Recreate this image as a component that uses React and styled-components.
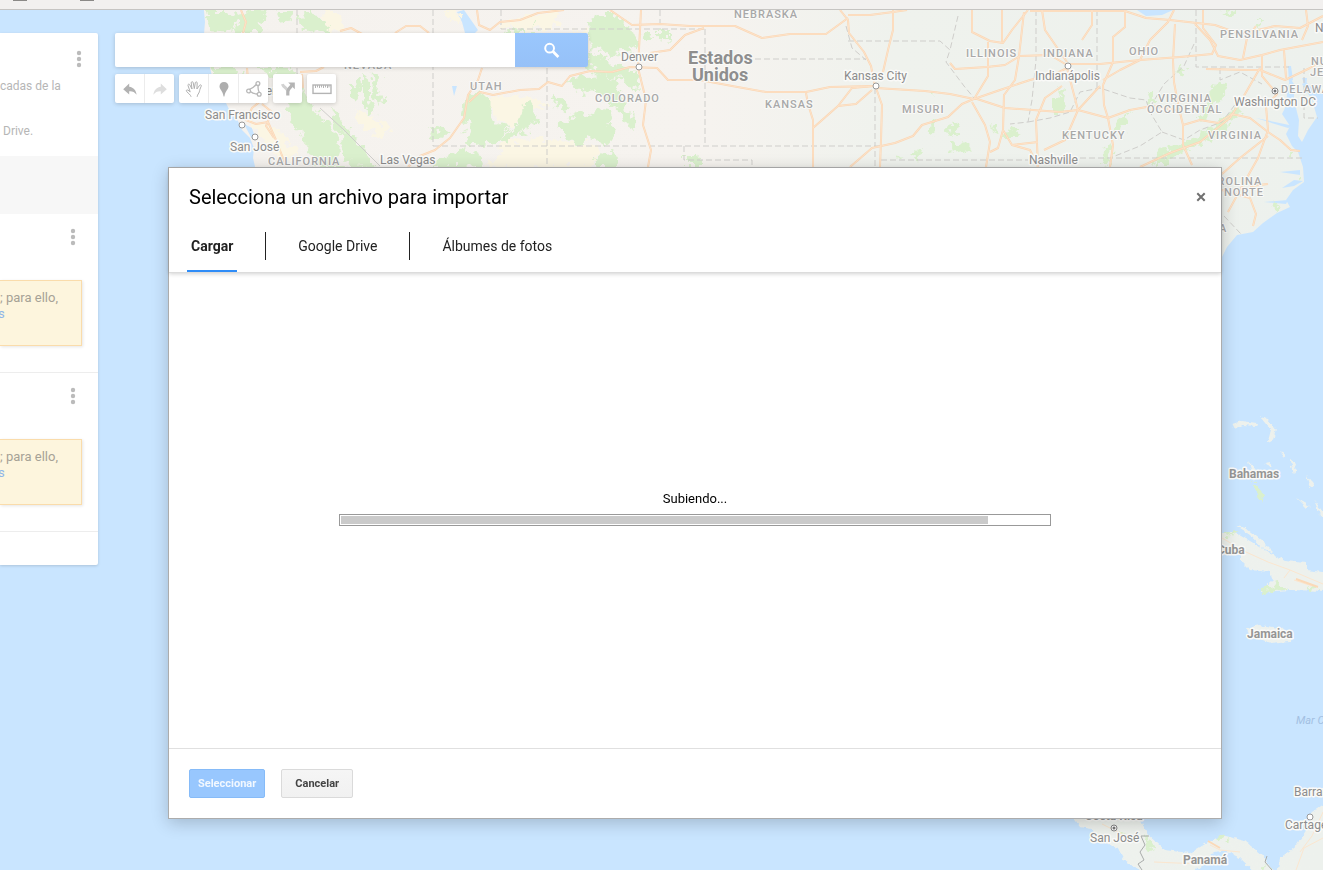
import styled, { createGlobalStyle } from 'styled-components';

const greens = [
    'M207 10 L226 10 L232 16 L242 12 L262 10 L268 16 L258 22 L264 33 L240 33 L236 24 L228 32 L210 30Z',
    'M216 12 L232 20 L226 28 L212 22Z',
    'M276 12 L290 12 L292 20 L280 22Z',
    'M300 10 L312 10 L318 18 L329 25 L328 33 L312 28 L302 33Z',
    'M210 68 L236 68 L243 76 L238 84 L242 92 L228 98 L216 82Z',
    'M252 68 L290 68 L298 76 L280 78Z',
    'M286 96 L302 92 L310 104 L322 118 L334 130 L340 148 L336 160 L346 168 L318 168 L308 148 L298 128 L288 112Z',
    'M338 130 L350 140 L364 150 L378 166 L352 168 L344 148Z',
    'M330 106 L342 122 L356 140 L350 142 L334 124Z',
    'M352 84 L358 78 L362 86 L356 102 L352 98Z',
    'M362 74 L370 80 L370 100 L374 112 L368 114 L362 96Z',
    'M374 72 L380 80 L378 92 L384 98 L378 106 L372 94Z',
    'M464 100 L474 94 L484 96 L492 104 L490 116 L498 124 L510 126 L504 138 L490 144 L474 146 L464 138 L470 126 L462 116Z',
    'M430 126 L440 130 L450 132 L446 140 L432 138Z',
    'M432 162 L448 156 L456 152 L464 150 L480 154 L482 166 L434 168Z',
    'M516 122 L522 108 L532 104 L536 116 L530 130 L516 136Z',
    'M532 120 L540 118 L538 124Z',
    'M502 140 L514 126 L518 130 L508 142Z',
    'M588 22 L600 14 L614 14 L622 24 L632 30 L636 42 L630 52 L618 48 L612 60 L602 48 L590 50Z',
    'M590 52 L604 56 L612 64 L636 70 L640 92 L628 88 L618 76 L596 74 L588 64Z',
    'M504 30 L522 32 L536 32 L534 34 L506 34Z M533 18 L536 18 L535 30Z',
    'M552 94 L560 96 L570 108 L566 114 L556 106Z',
    'M566 84 L580 76 L600 74 L620 78 L616 88 L624 98 L618 108 L604 100 L596 90 L580 92Z',
    'M554 128 L566 120 L578 114 L592 116 L602 108 L612 114 L608 124 L614 136 L606 146 L592 138 L580 144 L566 138Z',
    'M608 96 L622 106 L634 118 L636 128 L626 122Z',
    'M644 32 L652 32 L654 38 L646 38Z M658 30 L670 30 L670 41 L658 38Z',
    'M594 160 L604 152 L614 150 L620 160 L616 168 L598 168Z',
    'M684 156 L700 156 L702 166 L684 166Z',
    'M926 124 L936 122 L934 134 L926 132Z',
    'M952 118 L960 120 L956 136 L946 134Z',
    'M950 142 L970 144 L968 150 L952 154Z',
    'M914 152 L922 150 L918 160 L910 156Z M894 154 L902 156 L898 160Z M932 92 L934 94 L930 96Z',
    'M990 124 L998 128 L996 136Z M1008 130 L1022 126 L1016 138 L1006 138Z',
    'M1056 94 L1064 86 L1062 116 L1056 116Z',
    'M1116 122 L1130 110 L1124 130 L1112 132Z',
    'M1104 150 L1112 142 L1110 166 L1102 162Z',
    'M1146 94 L1154 94 L1154 101 L1148 101Z',
    'M1177 74 L1186 67 L1184 76Z',
    'M1212 88 L1222 80 L1226 92 L1216 106 L1204 118 L1198 118Z',
    'M1160 150 L1184 144 L1214 126 L1236 108 L1240 112 L1218 134 L1192 148 L1166 158 L1152 162Z',
    'M1156 162 L1168 158 L1168 166 L1154 166Z',
    'M1220 12 L1236 10 L1236 17Z',
    'M1254 22 L1262 22 L1260 28Z',
    'M1272 202 L1282 206 L1276 210Z',
    'M1286 154 L1294 152 L1292 159Z M1300 180 L1304 180 L1303 184Z',
];

const deserts = [
    'M322 12 L340 12 L346 30 L330 32Z',
    'M484 98 L520 94 L548 104 L520 118 L512 126 L500 122Z',
    'M506 142 L540 138 L600 146 L592 168 L486 168Z',
    'M446 10 L458 10 L460 24 L448 20Z',
    'M500 24 L536 12 L556 14 L560 26 L520 32Z',
    'M250 120 L280 130 L300 156 L280 160 L262 140Z',
    'M574 32 L586 30 L588 50 L580 60Z',
    'M354 110 L372 116 L392 130 L384 136 L362 126Z',
];

const roads = [
    'M241 10 L246 22 L243 33',
    'M247 68 L248 80 L262 100 L252 108 L246 120 L256 124 L268 122 L276 140 L286 166',
    'M262 104 L272 112 L266 126 L274 138',
    'M300 72 L316 71 L324 67',
    'M302 74 L303 88',
    'M340 31 L351 28 L362 34',
    'M395 33 L406 26 L420 26 L429 33',
    'M477 10 L479 25 L490 30 L500 22 L520 20 L538 13 L564 10',
    'M482 68 L478 80 L468 95 L464 118 L450 138 L435 150 L420 156 L408 167',
    'M469 102 L480 92 L493 95 L520 90 L539 89 L548 82 L562 86 L570 76 L590 71 L612 72 L630 67 L657 68 L668 80 L700 80 L732 86 L766 92 L806 92 L830 87 L874 86',
    'M641 10 L640 30 L638 68 L646 100 L643 125 L651 150 L648 167',
    'M610 10 L632 25 L660 24 L690 26 L710 26 L735 26 L762 38 L790 34 L826 34 L848 18',
    'M650 53 L670 50 L685 35 L704 28',
    'M840 10 L848 20 L849 33 L864 52 L871 66 L875 86',
    'M848 15 L870 15 L893 12 L907 10',
    'M893 10 L893 30 L888 50 L883 72',
    'M876 88 L882 105 L881 140 L880 167',
    'M850 167 L872 148 L895 143 L913 136 L922 125 L948 117 L962 104 L976 98',
    'M876 88 L925 91 L950 94 L974 99',
    'M813 167 L813 120 L808 104 L806 93',
    'M813 128 L838 106 L852 88 L874 86',
    'M838 106 L856 104 L872 90',
    'M974 99 L988 76 L988 42',
    'M972 10 L972 32 L990 41 L1003 43 L1012 30 L1028 10',
    'M1002 10 L1002 43',
    'M950 63 L955 69 L987 67 L1005 65 L1020 56 L1050 55 L1067 65',
    'M974 99 L1000 90 L1030 80 L1055 74 L1067 68',
    'M974 98 L1005 108 L1060 112 L1078 110',
    'M972 102 L985 125 L990 142 L986 167',
    'M1024 12 L1019 56 L1015 80 L1004 95 L1003 130 L1012 145 L1038 142',
    'M1003 130 L998 148 L990 152',
    'M1012 145 L1030 150 L1038 167 L1036 120 L1045 98 L1062 86',
    'M1042 10 L1045 30 L1067 62',
    'M1092 10 L1092 25 L1082 40',
    'M1125 10 L1125 27 L1113 37 L1113 62 L1103 85',
    'M1030 11 L1080 11 L1125 11 L1146 18 L1170 20 L1215 25 L1240 34 L1275 26 L1300 28 L1323 16',
    'M1067 64 L1100 64 L1140 60 L1180 57 L1212 54 L1216 45 L1203 28 L1203 10',
    'M1100 86 L1078 110 L1065 140 L1044 150',
    'M1103 85 L1104 105 L1108 118 L1113 145 L1110 167',
    'M1067 68 L1078 110',
    'M1078 110 L1108 118 L1130 110 L1152 106 L1176 110',
    'M1103 80 L1120 70 L1140 60 L1150 40 L1168 22 L1174 10',
    'M1175 24 L1173 60 L1174 82 L1178 104 L1183 125 L1183 145 L1192 165',
    'M1195 24 L1210 40 L1218 56 L1240 60 L1262 55 L1280 50 L1323 42',
    'M1243 58 L1247 38 L1256 26',
    'M1140 167 L1170 153 L1200 142 L1230 118 L1245 94 L1260 68',
    'M1183 125 L1200 120 L1218 123 L1232 114 L1250 118 L1268 132 L1280 140 L1291 150 L1300 151',
    'M1262 55 L1262 76 L1277 94 L1266 106 L1268 130 L1258 158 L1240 190 L1228 212',
    'M1206 69 L1248 70 L1260 70 L1285 80 L1310 68 L1323 60',
    'M1284 50 L1286 78',
    'M1222 174 L1240 158 L1268 136',
    'M1222 190 L1250 198 L1256 214 L1253 226',
    'M1250 186 L1268 184',
    'M1306 10 L1308 26 L1302 40',
];

const borders = [
    'M297 10 V33', 'M297 68 V92',
    'M433 10 V146', 'M433 146 H880', 'M501 10 V29 H705', 'M547 68 V166', 'M660 10 V29', 'M705 29 V146',
    'M755 59 H866', 'M684 146 V160 H752 V166', 'M846 26 L852 48 L866 60', 'M848 41 H940 L950 50 L946 62 L964 86 L974 98',
    'M875 88 V166', 'M881 160 H1028', 'M1036 10 V60 L1032 100 L1028 122 L1010 124', 'M958 16 L950 50',
    'M1097 10 V90', 'M1028 122 L1050 118 L1070 112 L1080 92 L1100 88 L1130 98 L1146 100 L1150 112 L1162 132 L1140 146 L1110 158',
    'M1196 10 V67 H1290', 'M1194 44 L1184 66 L1164 84 L1152 104', 'M1080 158 H1302',
    'M1162 132 L1184 140 L1200 130 L1222 122 L1240 98', 'M1220 68 L1220 80 L1240 72 L1262 84', 'M1304 68 V118 H1318',
    'M1224 216 L1241 234',
];

const stateLabels = [
    [734, 18, 'NEBRASKA'], [344, 69, 'NEVADA'], [470, 90, 'UTAH'], [595, 102, 'COLORADO'],
    [765, 108, 'KANSAS'], [902, 113, 'MISURI'], [966, 57, 'ILLINOIS'], [1043, 57, 'INDIANA'],
    [1129, 55, 'OHIO'], [1220, 38, 'PENSILVANIA'], [1158, 102, 'VIRGINIA'], [1147, 113, 'OCCIDENTAL'],
    [1208, 139, 'VIRGINIA'], [1062, 139, 'KENTUCKY'], [268, 165, 'CALIFORNIA'], [1281, 93, 'DELAWARE'],
    [1311, 65, 'NUEVA'], [1310, 76, 'JERSEY'], [1201, 185, 'CAROLINA'], [1224, 196, 'NORTE'],
    [1219, 232, 'A'],
];

const cityLabels = [
    [205, 119, 'San Francisco'], [230, 151, 'San José'], [380, 164, 'Las Vegas'], [621, 61, 'Denver'],
    [844, 80, 'Kansas City'], [1035, 80, 'Indianápolis'], [1029, 164, 'Nashville'], [1234, 106, 'Washington DC'],
    [1315, 32, 'Nueva York'], [1090, 842, 'San José'], [1285, 829, 'Cartagena'], [1294, 796, 'Barranquilla'],
    [225, 95, 'Sacramento'],
];

const countryLabels = [
    [1229, 478, 'Bahamas'], [1217, 554, 'Cuba'], [1247, 638, 'Jamaica'], [1085, 820, 'Costa Rica'], [1183, 864, 'Panamá'],
];

const towns = [[242, 125], [255, 137], [639, 67], [876, 86], [1068, 66], [1310, 817]];
const capitals = [[1275, 91], [1114, 828]];

const Map = () => (
    <MapCanvas viewBox="0 10 1323 860" preserveAspectRatio="xMinYMin slice" aria-label="Mapa">
        <defs>
            <linearGradient id="land" x1="200" x2="1323" y1="0" y2="0" gradientUnits="userSpaceOnUse">
                <stop offset="0" stopColor="#f5f2ee" />
                <stop offset="0.45" stopColor="#f6f3ef" />
                <stop offset="0.62" stopColor="#eff2ed" />
                <stop offset="1" stopColor="#edf1ed" />
            </linearGradient>
            <filter id="rough" x="-5%" y="-5%" width="110%" height="110%" colorInterpolationFilters="sRGB">
                <feTurbulence type="fractalNoise" baseFrequency="0.12" numOctaves="3" seed="4" />
                <feDisplacementMap in="SourceGraphic" scale="16" xChannelSelector="R" yChannelSelector="G" />
            </filter>
            <filter id="coast" x="-5%" y="-5%" width="110%" height="110%" colorInterpolationFilters="sRGB">
                <feTurbulence type="fractalNoise" baseFrequency="0.2" numOctaves="2" seed="9" />
                <feDisplacementMap in="SourceGraphic" scale="5" xChannelSelector="R" yChannelSelector="G" />
            </filter>
        </defs>

        {/* mainland, islands and the isthmus */}
        <g fill="url(#land)">
            <path d="M203 0 L205 22 L204 34 L208 55 L210 68 L213 80 L220 96 L226 103 L231 113 L238 121 L242 130 L250 138 L254 148 L253 158 L257 175 L400 400 L1200 400 L1222 257 L1227 247 L1237 235 L1253 232 L1263 223 L1277 213 L1290 207 L1286 200 L1293 190 L1304 182 L1303 167 L1298 152 L1292 146 L1286 134 L1290 126 L1282 114 L1286 106 L1287 94 L1290 78 L1294 84 L1294 100 L1299 120 L1298 136 L1302 142 L1308 130 L1317 117 L1312 100 L1302 84 L1306 82 L1318 94 L1340 92 L1340 0Z" />
            <g filter="url(#coast)">
                <path d="M1200 532 L1235 532 L1250 541 L1270 553 L1285 561 L1307 563 L1307 570 L1330 573 L1330 591 L1290 590 L1260 592 L1273 580 L1270 572 L1250 570 L1241 561 L1241 552 L1200 548Z" />
                <path d="M1246 628 L1260 625 L1280 628 L1293 637 L1290 641 L1270 643 L1250 636Z" />
                <path d="M1236 526 L1246 528 L1262 541 L1274 553 L1262 548 L1250 535Z" />
                <path d="M1232 424 L1242 421 L1257 423 L1256 426 L1242 425 L1234 428Z M1260 417 L1268 419 L1276 430 L1272 443 L1268 441 L1271 430Z" />
                <path d="M1249 462 L1256 470 L1254 482Z M1264 464 L1271 463 L1270 467Z M1280 452 L1286 455 L1284 458Z M1290 458 L1297 464 L1294 474Z M1306 475 L1315 486 L1310 488Z M1296 498 L1310 506 L1306 508Z M1314 500 L1326 516 L1320 515Z" />
                <path d="M1070 815 L1080 827 L1092 829 L1100 840 L1118 848 L1124 860 L1135 868 L1165 880 L1196 870 L1206 862 L1211 853 L1224 850 L1240 858 L1258 875 L1276 875 L1262 855 L1245 841 L1222 835 L1207 843 L1190 853 L1165 850 L1148 835 L1138 815Z" />
                <path d="M1330 800 L1312 812 L1307 830 L1297 845 L1280 858 L1276 880 L1330 880Z" />
            </g>
        </g>

        {/* lakes and inlets */}
        <g fill="#c9e5ff">
            <path d="M457 12 L464 10 L471 20 L478 30 L474 34 L465 33 L462 22Z M452 86 L457 86 L454 96Z M1137 10 L1173 10 L1162 15 L1146 16Z" />
            <path d="M1288 66 L1291 66 L1293 80 L1289 82Z M1302 78 L1307 78 L1306 88Z M1282 188 L1294 180 L1303 181 L1294 186Z M1280 172 L1300 170 L1300 175Z M1264 202 L1288 200 L1286 204Z M1256 118 L1294 126 L1288 128Z" />
            <path d="M244 124 L252 128 L256 140 L252 139Z" />
        </g>

        <g filter="url(#rough)">
            {deserts.map(d => <path key={d} d={d} fill="#fbf6e4" />)}
            {greens.map(d => <path key={d} d={d} fill="#daf0cd" />)}
            <path fill="#daf0cd" d="M1260 588 L1284 584 L1290 589 L1264 593Z M1308 588 L1316 586 L1314 592Z M1253 484 L1262 484 L1264 497 L1258 498Z M1222 531 L1236 530 L1232 536Z M1144 834 L1156 846 L1148 852Z M1216 838 L1226 836 L1222 843Z M1264 864 L1268 870 L1262 870Z M1120 830 L1126 834 L1120 838Z" />
        </g>

        <g fill="none" stroke="#cfcecb" strokeWidth="1" strokeDasharray="6 3">
            {borders.map(d => <path key={d} d={d} />)}
        </g>
        <g fill="none" stroke="#a9acab" strokeWidth="1">
            <path d="M1149 836 L1141 836 L1145 845 L1140 852 L1144 860 L1138 864 L1142 870" />
            <path d="M1267 856 L1265 862 L1272 870" />
            <path d="M320 108 L344 130 L380 166" stroke="#cfcecb" />
        </g>

        <g fill="none" stroke="#fbd6b3" strokeWidth="2" strokeLinejoin="round">
            {roads.map(d => <path key={d} d={d} />)}
        </g>
        <g fill="none" stroke="#fde3ca" strokeWidth="1" strokeLinejoin="round">
            {roads.map(d => <path key={d} d={d} />)}
        </g>
        <g fill="none" stroke="#fbe6cf" strokeWidth="1">
            <path d="M1222 538 L1246 552 L1268 562 L1290 570 L1323 584 M1290 570 L1284 578 M1294 580 L1312 586" />
            <path d="M1102 824 L1130 838 M1210 845 L1220 850 L1240 852 M1154 862 L1200 864 M1323 812 L1312 836 L1300 852 M1323 838 L1304 848 L1296 870" />
        </g>
        <path d="M1208 841 L1220 848 M1296 579 L1318 587" fill="none" stroke="#fbd9b8" strokeWidth="2" />

        {towns.map(([x, y]) => <circle key={x} cx={x} cy={y} r="3" fill="#fff" stroke="#999" />)}
        {capitals.map(([x, y]) => (
            <g key={x}>
                <circle cx={x} cy={y} r="3" fill="#fff" stroke="#858585" />
                <circle cx={x} cy={y} r="1.5" fill="#777" />
            </g>
        ))}

        {stateLabels.map(([x, y, name]) => <StateLabel key={`${name}${y}`} x={x} y={y}>{name}</StateLabel>)}
        {cityLabels.map(([x, y, name]) => <CityLabel key={`${name}${y}`} x={x} y={y}>{name}</CityLabel>)}
        {countryLabels.map(([x, y, name]) => <CountryLabel key={name} x={x} y={y}>{name}</CountryLabel>)}
        <NationLabel x="688" y="64">Estados</NationLabel>
        <NationLabel x="692" y="81">Unidos</NationLabel>
        <SeaLabel x="1296" y="724">Mar Caribe</SeaLabel>
    </MapCanvas>
);

const Dots = () => (
    <svg width="6" height="18" viewBox="0 0 6 18" fill="#bbb">
        <circle cx="3" cy="3" r="2.2" />
        <circle cx="3" cy="9" r="2.2" />
        <circle cx="3" cy="15" r="2.2" />
    </svg>
);

const UndoIcon = ({ color, flip }) => (
    <svg width="20" height="20" viewBox="0 0 20 20">
        <path
            transform={flip ? 'translate(20 0) scale(-1 1)' : undefined}
            fill={color}
            d="M9.2 4.6 L3.2 10.2 L9.2 15.4 V12.2 C12.4 12 14.6 12.8 16.6 15.8 C16.2 11.8 13.8 8.4 9.2 7.8Z"
        />
    </svg>
);

const HandIcon = () => (
    <svg width="20" height="20" viewBox="0 0 20 20" fill="none" stroke="#b0b0b0" strokeWidth="1" strokeLinejoin="round" strokeLinecap="round">
        <path d="M7 17.4 C6.4 15.6 4.6 14.6 2.7 12.6 C1.7 11.4 2.8 10.5 4 11.1 L6.2 12.9 L4 6.5 C3.6 5.1 5.2 4.6 5.8 5.9 L8 10 L7.2 3.8 C7.2 2.4 9 2.3 9.2 3.6 L10.3 9.6 L11.3 3.7 C11.6 2.4 13.3 2.7 13.2 4 L12.9 10 L15.6 6.3 C16.4 5.2 17.8 6.1 17.2 7.3 C16 9.6 15.7 11.2 15.3 12.9 C14.9 14.5 13.5 15.2 13.2 17.4" />
    </svg>
);

const PinIcon = () => (
    <svg width="20" height="20" viewBox="0 0 20 20" fill="#aeaeae">
        <path d="M10 3 C7.2 3 5.5 5 5.5 7.4 C5.5 10.4 9 12 9.6 17.4 H10.4 C11 12 14.5 10.4 14.5 7.4 C14.5 5 12.8 3 10 3Z" />
    </svg>
);

const LineIcon = () => (
    <svg width="20" height="20" viewBox="0 0 20 20" fill="none" stroke="#b8b8b8" strokeWidth="1.3">
        <path d="M12.2 5.4 C10.4 8 7.4 9.6 5 10.6 M6.4 12.6 C8.6 14.6 11 15 13.2 15 M14.2 6.6 C13.8 9 14.2 11.4 15.2 13.2" />
        <circle cx="13.9" cy="4.6" r="1.9" />
        <circle cx="4.6" cy="12" r="1.9" />
        <circle cx="15.2" cy="15.2" r="1.9" />
    </svg>
);

const RouteIcon = () => (
    <svg width="20" height="20" viewBox="0 0 20 20">
        <path d="M4.4 5.2 C5.4 8.8 9.6 8.4 9.8 12.5" fill="none" stroke="#d2d2d2" strokeWidth="3" />
        <path d="M9.8 16.6 V12.8 C9.8 10.6 11 9.4 13.8 6.6" fill="none" stroke="#b4b4b4" strokeWidth="3.2" />
        <path d="M10.2 3.6 H16.8 V10.2Z" fill="#b4b4b4" />
    </svg>
);

const RulerIcon = () => (
    <svg width="20" height="20" viewBox="0 0 20 20" fill="none" stroke="#b4b4b4">
        <rect x="1" y="6" width="18" height="8.4" strokeWidth="1.4" />
        <path d="M3.5 6 V9 M5.5 6 V8.4 M7.5 6 V9 M9.5 6 V8.4 M11.5 6 V9 M13.5 6 V8.4 M15.5 6 V9 M17 6 V8.4" />
    </svg>
);

const SearchIcon = () => (
    <svg width="18" height="18" viewBox="0 0 18 18" fill="none" stroke="#fff">
        <circle cx="6.6" cy="7.2" r="4.4" strokeWidth="2" />
        <path d="M10 10.6 L15.4 16" strokeWidth="2.8" />
    </svg>
);

const CloseIcon = () => (
    <svg width="10" height="10" viewBox="0 0 10 10" fill="none" stroke="#707070" strokeWidth="2">
        <path d="M1.3 1.3 L8.7 8.7 M8.7 1.3 L1.3 8.7" />
    </svg>
);

const Layer = () => (
    <LayerSection>
        <LayerMenu aria-label="Opciones de capa"><Dots /></LayerMenu>
        <Note>
            <p>; para ello,</p>
            <a href="#ayuda">s</a>
        </Note>
    </LayerSection>
);

const App = () => {
    return (
        <>
            <GlobalStyle />
            <Page>
                <BrowserBar><i /><i /></BrowserBar>
                <Workspace>
                    <Map />
                    <Sidebar>
                        <MapInfo>
                            <MapMenu aria-label="Opciones del mapa"><Dots /></MapMenu>
                            <p>cadas de la</p>
                            <p className="last">Drive.</p>
                        </MapInfo>
                        <LayerActions />
                        <Layer />
                        <Layer />
                        <BaseMap />
                    </Sidebar>
                    <Controls>
                        <SearchBar>
                            <input type="text" aria-label="Buscar" />
                            <button type="button" aria-label="Buscar"><SearchIcon /></button>
                        </SearchBar>
                        <Toolbar>
                            <ToolGroup>
                                <Tool aria-label="Deshacer"><UndoIcon color="#b2b2b2" /></Tool>
                                <Tool aria-label="Rehacer"><UndoIcon color="#dedede" flip /></Tool>
                            </ToolGroup>
                            <ToolGroup>
                                <Tool aria-label="Mover"><HandIcon /></Tool>
                                <Tool aria-label="Añadir marcador"><PinIcon /></Tool>
                                <Tool aria-label="Trazar una línea"><LineIcon /></Tool>
                            </ToolGroup>
                            <ToolGroup>
                                <Tool aria-label="Añadir indicaciones"><RouteIcon /></Tool>
                            </ToolGroup>
                            <ToolGroup>
                                <Tool aria-label="Medir distancias"><RulerIcon /></Tool>
                            </ToolGroup>
                        </Toolbar>
                    </Controls>
                </Workspace>
            </Page>

            <Overlay>
                <Dialog role="dialog" aria-labelledby="picker-title">
                    <DialogHeader>
                        <TitleRow>
                            <h1 id="picker-title">Selecciona un archivo para importar</h1>
                            <button type="button" aria-label="Cerrar"><CloseIcon /></button>
                        </TitleRow>
                        <Tabs role="tablist">
                            <Tab role="tab" aria-selected="true" $active>Cargar</Tab>
                            <Separator />
                            <Tab role="tab" aria-selected="false">Google Drive</Tab>
                            <Separator />
                            <Tab role="tab" aria-selected="false">Álbumes de fotos</Tab>
                        </Tabs>
                    </DialogHeader>
                    <Upload>
                        <label htmlFor="upload">Subiendo...</label>
                        <progress id="upload" value="647" max="708" />
                    </Upload>
                    <DialogFooter>
                        <Button type="button" $primary>Seleccionar</Button>
                        <Button type="button">Cancelar</Button>
                    </DialogFooter>
                </Dialog>
            </Overlay>
        </>
    );
}

const GlobalStyle = createGlobalStyle`
    * {
        box-sizing: border-box;
        margin: 0;
        padding: 0;
    }
    body {
        font-family: Roboto, "Liberation Sans", sans-serif;
        background: #c9e5ff;
        overflow: hidden;
    }
    button, input {
        font-family: inherit;
        border: none;
        background: none;
    }
`;

const Page = styled.div`
    display: flex;
    flex-direction: column;
    min-height: 100vh;
`;

const BrowserBar = styled.div`
    display: flex;
    gap: 53px;
    height: 10px;
    padding-left: 13px;
    background: #f2f0ef;
    border-bottom: 1px solid #c6c4c2;
    i {
        width: 14px;
        height: 1px;
        background: #8b8987;
    }
`;

const Workspace = styled.div`
    flex: 1;
    position: relative;
    display: flex;
    align-items: flex-start;
    gap: 17px;
    padding-top: 23px;
`;

const MapCanvas = styled.svg`
    position: absolute;
    inset: 0;
    width: 100%;
    height: 100%;
    font-family: Roboto, "Liberation Sans", sans-serif;
`;

const Label = styled.text`
    paint-order: stroke;
    stroke: #fafaf8;
    stroke-width: 3px;
    stroke-linejoin: round;
`;

const StateLabel = styled(Label)`
    font-size: 11px;
    font-weight: 500;
    letter-spacing: 1px;
    fill: #a8a8a8;
    stroke-width: 2px;
`;

const CityLabel = styled(Label)`
    font-size: 12px;
    fill: #8c8c8c;
`;

const CountryLabel = styled(Label)`
    font-size: 12px;
    font-weight: 700;
    fill: #959595;
`;

const NationLabel = styled(Label)`
    font-size: 18px;
    font-weight: 700;
    fill: #8e8e8e;
    stroke-width: 2px;
`;

const SeaLabel = styled.text`
    font-size: 11px;
    font-style: italic;
    fill: #a3c0e2;
`;

const Sidebar = styled.aside`
    position: relative;
    width: 98px;
    flex-shrink: 0;
    background: white;
    border-radius: 0 2px 2px 0;
    box-shadow: 0 1px 3px rgb(0, 0, 0, 0.15);
    overflow: hidden;
`;

const MapInfo = styled.header`
    height: 123px;
    padding-top: 17px;
    display: flex;
    flex-direction: column;
    p {
        margin-top: 9px;
        font-size: 12px;
        line-height: 18px;
        color: #b6b6b6;
        white-space: nowrap;
    }
    p.last {
        margin-top: 27px;
        padding-left: 3px;
    }
`;

const MapMenu = styled.button`
    align-self: flex-end;
    display: flex;
    margin-right: 16px;
`;

const LayerActions = styled.div`
    height: 58px;
    background: #f7f7f7;
`;

const LayerSection = styled.section`
    height: 159px;
    padding-top: 14px;
    display: flex;
    flex-direction: column;
    border-bottom: 1px solid #ededed;
`;

const LayerMenu = styled(MapMenu)`
    margin-right: 22px;
`;

const Note = styled.div`
    height: 66px;
    margin: 34px 16px 0 0;
    padding-top: 9px;
    background: #fdf5dd;
    border: 1px solid #fadcab;
    border-left: none;
    box-shadow: 1px 1px 3px rgb(0, 0, 0, 0.1);
    font-size: 13px;
    line-height: 16px;
    color: #a6a296;
    white-space: nowrap;
    a {
        display: block;
        margin-left: -2px;
        color: #8fb6e8;
        text-decoration: none;
    }
`;

const BaseMap = styled.div`
    height: 33px;
`;

const Controls = styled.div`
    position: relative;
    display: flex;
    flex-direction: column;
    gap: 7px;
`;

const SearchBar = styled.div`
    display: flex;
    height: 34px;
    box-shadow: 0 1px 4px rgb(0, 0, 0, 0.18);
    border-radius: 2px;
    input {
        width: 400px;
        padding: 0 8px;
        background: white;
        border-radius: 2px 0 0 2px;
    }
    button {
        width: 73px;
        display: flex;
        align-items: center;
        justify-content: center;
        background: linear-gradient(#9ac7fd, #96c1f8);
        border-radius: 0 2px 2px 0;
    }
`;

const Toolbar = styled.div`
    display: flex;
    gap: 5px;
`;

const ToolGroup = styled.div`
    display: flex;
    background: white;
    border-radius: 2px;
    box-shadow: 0 1px 4px rgb(0, 0, 0, 0.18);
`;

const Tool = styled.button`
    width: 29px;
    height: 29px;
    display: flex;
    align-items: center;
    justify-content: center;
    & + & {
        width: 30px;
        border-left: 1px solid #ececec;
    }
`;

const Overlay = styled.div`
    position: fixed;
    inset: 0;
    display: flex;
    padding: 167px 101px 51px 168px;
`;

const Dialog = styled.div`
    flex: 1;
    display: flex;
    flex-direction: column;
    background: white;
    border: 1px solid #acacac;
    box-shadow: 0 4px 16px rgb(0, 0, 0, 0.2);
`;

const DialogHeader = styled.div`
    padding-top: 17px;
    border-bottom: 1px solid #dcdcdc;
    box-shadow: 0 1px 4px rgb(0, 0, 0, 0.18);
`;

const TitleRow = styled.div`
    display: flex;
    align-items: center;
    justify-content: space-between;
    padding: 0 15px 0 20px;
    h1 {
        font-size: 20px;
        font-weight: 400;
        line-height: 24px;
        color: black;
    }
    button {
        display: flex;
    }
`;

const Tabs = styled.div`
    display: flex;
    align-items: center;
    gap: 28px;
    height: 52px;
    margin-top: 11px;
    padding-left: 18px;
`;

const Tab = styled.button`
    height: 52px;
    padding: 0 4px;
    font-size: 14px;
    font-weight: ${({ $active }) => ($active ? 700 : 400)};
    color: #222;
    border-top: 2px solid transparent;
    border-bottom: 2px solid ${({ $active }) => ($active ? '#2f8cf7' : 'transparent')};
`;

const Separator = styled.span`
    width: 1px;
    height: 28px;
    background: #222;
`;

const Upload = styled.div`
    flex: 1;
    display: flex;
    flex-direction: column;
    align-items: center;
    justify-content: center;
    gap: 7px;
    padding: 0 170px 5px;
    label {
        font-size: 13px;
        line-height: 16px;
        color: black;
    }
    progress {
        display: block;
        width: 100%;
        height: 12px;
        padding: 1px;
        appearance: none;
        border: 1px solid #999;
        background: white;
    }
    progress::-webkit-progress-bar {
        background: white;
    }
    progress::-webkit-progress-value {
        background: #cacaca;
    }
`;

const DialogFooter = styled.div`
    display: flex;
    gap: 16px;
    padding: 20px;
    border-top: 1px solid #e0e0e0;
`;

const Button = styled.button`
    height: 29px;
    min-width: 72px;
    padding: 0 8px;
    font-size: 11px;
    font-weight: 700;
    border-radius: 2px;
    color: ${({ $primary }) => ($primary ? '#f2f8ff' : '#444')};
    background: ${({ $primary }) => ($primary ? '#98c7fe' : 'linear-gradient(#f5f5f5, #f1f1f1)')};
    border: 1px solid ${({ $primary }) => ($primary ? '#86bbf8' : '#dadada')};
`;

export default App;
